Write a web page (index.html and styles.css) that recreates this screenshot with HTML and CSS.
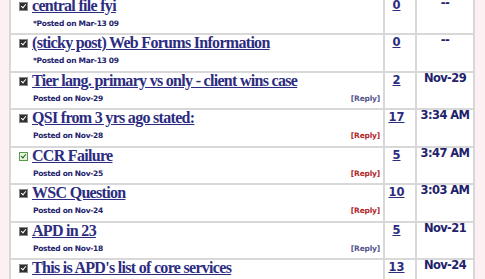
FILE: index.html
```html
<!DOCTYPE html>
<html>
<head>
<meta charset="utf-8">
<title>Forum topics</title>
<link rel="stylesheet" href="styles.css">
</head>
<body>
<div class="page">
<table class="topics">
  <colgroup><col class="c1"><col class="c2"><col class="c3"></colgroup>
  <tr>
    <td class="topic">
      <div class="ttl"><span class="chk"></span><a href="#">central file fyi</a></div>
      <div class="meta"><span class="posted">*Posted on Mar-13 09</span></div>
    </td>
    <td class="cnt"><a href="#">0</a></td>
    <td class="last">--</td>
  </tr>
  <tr>
    <td class="topic">
      <div class="ttl"><span class="chk"></span><a href="#">(sticky post) Web Forums Information</a></div>
      <div class="meta"><span class="posted">*Posted on Mar-13 09</span></div>
    </td>
    <td class="cnt"><a href="#">0</a></td>
    <td class="last">--</td>
  </tr>
  <tr>
    <td class="topic">
      <div class="ttl"><span class="chk"></span><a href="#">Tier lang. primary vs only - client wins case</a></div>
      <div class="meta"><span class="posted">Posted on Nov-29</span><a class="reply" href="#">[Reply]</a></div>
    </td>
    <td class="cnt"><a href="#">2</a></td>
    <td class="last">Nov-29</td>
  </tr>
  <tr>
    <td class="topic">
      <div class="ttl"><span class="chk"></span><a href="#">QSI from 3 yrs ago stated:</a></div>
      <div class="meta"><span class="posted">Posted on Nov-28</span><a class="reply hot" href="#">[Reply]</a></div>
    </td>
    <td class="cnt"><a href="#">17</a></td>
    <td class="last">3:34 AM</td>
  </tr>
  <tr>
    <td class="topic">
      <div class="ttl"><span class="chk new"></span><a href="#">CCR Failure</a></div>
      <div class="meta"><span class="posted">Posted on Nov-25</span><a class="reply hot" href="#">[Reply]</a></div>
    </td>
    <td class="cnt"><a href="#">5</a></td>
    <td class="last">3:47 AM</td>
  </tr>
  <tr>
    <td class="topic">
      <div class="ttl"><span class="chk"></span><a href="#">WSC Question</a></div>
      <div class="meta"><span class="posted">Posted on Nov-24</span><a class="reply hot" href="#">[Reply]</a></div>
    </td>
    <td class="cnt"><a href="#">10</a></td>
    <td class="last">3:03 AM</td>
  </tr>
  <tr>
    <td class="topic">
      <div class="ttl"><span class="chk"></span><a href="#">APD in 23</a></div>
      <div class="meta"><span class="posted">Posted on Nov-18</span><a class="reply" href="#">[Reply]</a></div>
    </td>
    <td class="cnt"><a href="#">5</a></td>
    <td class="last">Nov-21</td>
  </tr>
  <tr>
    <td class="topic">
      <div class="ttl"><span class="chk"></span><a href="#">This is APD's list of core services</a></div>
      <div class="meta"><span class="posted">Posted on Nov-24</span><a class="reply" href="#">[Reply]</a></div>
    </td>
    <td class="cnt"><a href="#">13</a></td>
    <td class="last">Nov-24</td>
  </tr>
</table>
</div>
</body>
</html>
```

FILE: styles.css
```css
/* base */
html,body{margin:0;padding:0;}
body{background:#fcf0f2;font-family:"DejaVu Sans",Verdana,sans-serif;color:#22226b;}

/* topic table */
.page{padding:0 10px 0 9px;margin-top:-4.5px;}
.topics{width:466px;table-layout:fixed;border-collapse:separate;border-spacing:2px;background:#d8d8d8;}
.c1{width:372px;}
.c2{width:30px;}
.c3{width:56px;}
.topics tr{height:35.5px;}
.topics td{background:#fff;vertical-align:top;padding:0 3px;overflow:hidden;}

.ttl{height:20px;line-height:15px;white-space:nowrap;}
.ttl a{font-family:"Liberation Serif","Times New Roman",serif;font-weight:bold;font-size:16px;letter-spacing:-0.7px;color:#2c2c80;}
.chk{display:inline-block;width:7px;height:7px;margin:0 4px 0 5px;background:#2e2e2e;border:1px solid #8a8a8a;vertical-align:0px;position:relative;}
.chk:after{content:"";position:absolute;left:2px;top:0px;width:2px;height:4px;border:solid #fff;border-width:0 1.5px 1.5px 0;transform:rotate(40deg);}
.chk.new{background:#e4f4dc;border-color:#5b9a4a;}
.chk.new:after{border-color:#2d5a26;}

.meta{height:12px;padding-left:19px;font-size:7.5px;font-weight:bold;letter-spacing:-0.3px;line-height:12px;white-space:nowrap;}
.reply{float:right;font-size:7.5px;letter-spacing:-0.2px;color:#55558a;text-decoration:none;}
.reply.hot{color:#b02828;}

.topics td.cnt{padding:0 10px 0 3px;text-align:center;font-size:11.5px;font-weight:bold;line-height:15px;}
.cnt a{color:#2c2c80;}
.last{text-align:center;font-size:11.5px;font-weight:bold;letter-spacing:-0.6px;line-height:11px;}
```
